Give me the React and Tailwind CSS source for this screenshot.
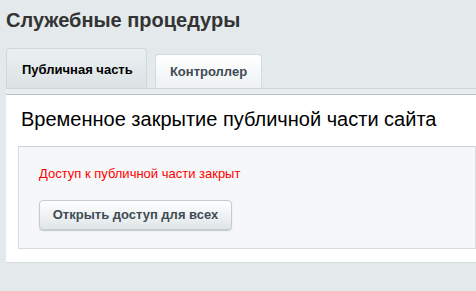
export default function App() {
    return (
        <div className="w-[476px] h-[291px] overflow-hidden bg-[#e4eaeb] font-['Liberation_Sans',Arial,sans-serif]">
            {/* Page title */}
            <h1 className="pl-[6px] pt-[7px] h-[48px] text-[20px] font-bold text-[#333] leading-[26px]">
                Служебные процедуры
            </h1>

            {/* Tabs */}
            <div className="flex items-end pl-[6px] gap-[8px] h-[40px]">
                <div className="w-[141px] h-[40px] rounded-t-[4px] border border-b-0 border-[#cfd8db] bg-gradient-to-b from-[#ebf0f1] to-[#dce3e5] flex items-center pl-[15px] pt-[2px] text-[13px] font-bold text-black">
                    Публичная часть
                </div>
                <div className="w-[107px] h-[34px] rounded-t-[4px] border border-b-0 border-[#d3dbde] bg-gradient-to-b from-white to-[#eef2f3] flex items-center justify-center text-[13px] font-bold text-[#3f4b54]">
                    Контроллер
                </div>
            </div>

            {/* Panel */}
            <div className="ml-[6px] border-t border-[#cfd6d9] bg-[#e9eef0] pt-[5px]">
                <div className="border-t border-[#b9c3c7] bg-white pl-[12px] pb-[13px] border-b border-b-[#d3dadd]">
                    <h2 className="pt-[11px] pl-[3px] text-[20px] leading-[26px] text-black h-[51px]">
                        Временное закрытие публичной части сайта
                    </h2>
                    <div className="h-[103px] bg-[#f5f7f8] border border-[#d5dde0] border-t-[#c9d2d5] pl-[20px] pt-[19px]">
                        <p className="text-[13px] leading-[16px] text-[#ff0000]">
                            Доступ к публичной части закрыт
                        </p>
                        <button className="mt-[18px] h-[30px] w-[193px] rounded-[4px] border border-[#c3ccd0] bg-gradient-to-b from-white to-[#dfe6e8] shadow-[0_1px_1px_rgba(0,0,0,0.2)] text-[13px] font-bold text-[#3f4b54]">
                            Открыть доступ для всех
                        </button>
                    </div>
                </div>
            </div>
        </div>
    );
}
